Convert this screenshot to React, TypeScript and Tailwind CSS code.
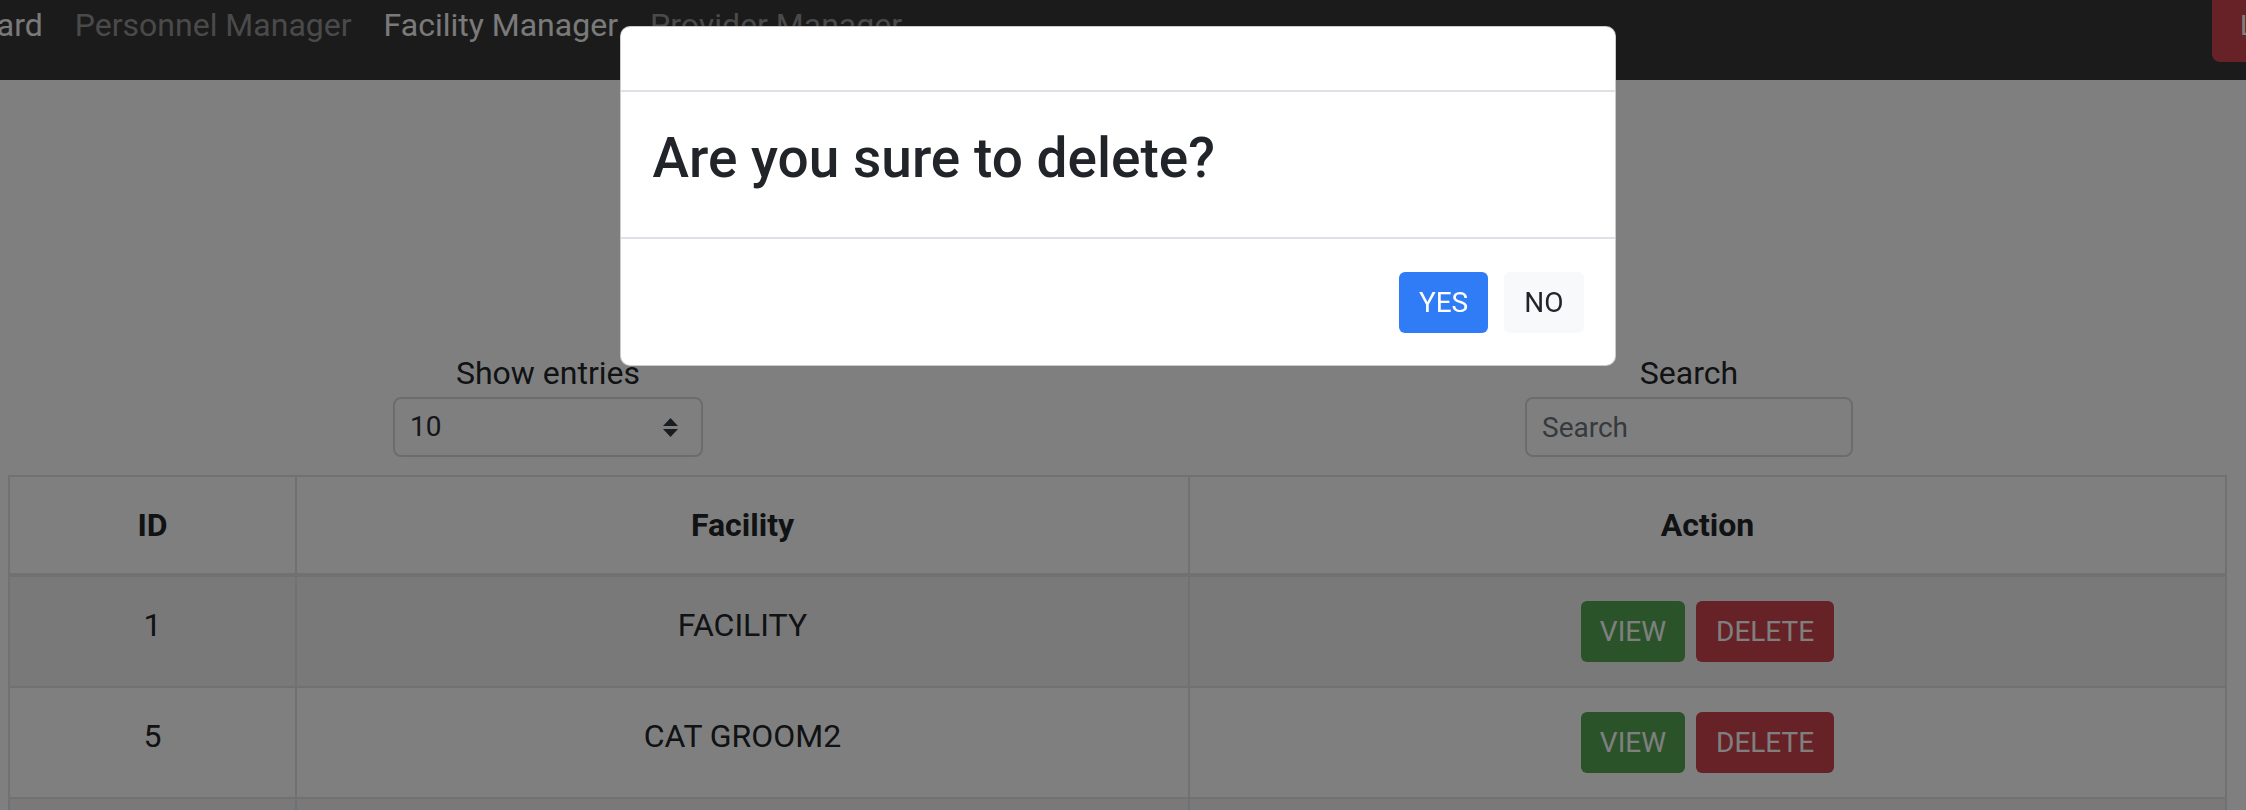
const rows = [
  { id: 1, name: "FACILITY" },
  { id: 5, name: "CAT GROOM2" },
  { id: 6, name: "DOG WALK" },
];

function NavLink({ label, active }: { label: string; active?: boolean }) {
  return (
    <a className={active ? "px-4 text-[#f4f4f4]" : "px-4 text-[#959595]"}>{label}</a>
  );
}

export default function App() {
  return (
    <div className="relative h-[810px] overflow-hidden bg-white font-['Roboto',sans-serif] text-[#212529]">
      <nav className="flex h-[80px] items-start overflow-hidden bg-[#363636]">
        <div className="-ml-[128px] flex pt-[1px] text-[32px] leading-[48px] whitespace-nowrap">
          <NavLink label="Dashboard" active />
          <NavLink label="Personnel Manager" />
          <NavLink label="Facility Manager" active />
          <NavLink label="Provider Manager" />
        </div>
        <button className="-mt-[10px] -mr-[109px] ml-auto h-[72px] w-[143px] shrink-0 rounded-lg bg-[#cc444c] px-7 text-left text-[28px] text-white">
          Logout
        </button>
      </nav>

      <main className="pt-[269px]">
        <div className="flex items-start pl-[393px]">
          <div className="flex w-[310px] flex-col items-center">
            <label className="text-[32px] leading-[48px]">Show entries</label>
            <div className="flex h-[60px] w-full items-center justify-between rounded-lg border-2 border-[#d6d8de] pr-[23px] pl-[15px] text-[28px] text-[#2a2d31]">
              <span>10</span>
              <svg width="15" height="19" viewBox="0 0 15 19" fill="#343a40">
                <polygon points="0,8 7.5,0 15,8" />
                <polygon points="0,11 15,11 7.5,19" />
              </svg>
            </div>
          </div>
          <div className="ml-[822px] flex w-[328px] flex-col items-center">
            <label className="text-[32px] leading-[48px]">Search</label>
            <input
              placeholder="Search"
              className="h-[60px] w-full rounded-lg border-2 border-[#d6d8de] pl-[15px] text-[28px] outline-none placeholder:text-[#6c757d]"
            />
          </div>
        </div>

        <table className="mt-[18px] ml-[8px] w-[2219px] table-fixed border-collapse text-[32px] leading-[48px]">
          <thead>
            <tr>
              <th className="w-[287px] border-2 border-b-4 border-[#dee2e6] p-6 align-top font-bold">ID</th>
              <th className="w-[893px] border-2 border-b-4 border-[#dee2e6] p-6 align-top font-bold">Facility</th>
              <th className="border-2 border-b-4 border-[#dee2e6] p-6 align-top font-bold">Action</th>
            </tr>
          </thead>
          <tbody>
            {rows.map((r, i) => (
              <tr key={r.id} className={i % 2 === 0 ? "bg-[#f2f2f2]" : "bg-white"}>
                <td className="border-2 border-[#dee2e6] p-6 text-center align-top">{r.id}</td>
                <td className="border-2 border-[#dee2e6] p-6 text-center align-top">{r.name}</td>
                <td className="border-2 border-[#dee2e6] p-6 align-top">
                  <div className="flex justify-center gap-[11px] text-[28px] text-white">
                    <button className="h-[61px] rounded-md bg-[#54a654] px-[19px]">VIEW</button>
                    <button className="h-[61px] rounded-md bg-[#cc444c] px-[20px]">DELETE</button>
                  </div>
                </td>
              </tr>
            ))}
          </tbody>
        </table>
      </main>

      <div className="fixed inset-0 flex items-start justify-center bg-black/50 pt-[26px] pr-[11px]">
        <div className="w-[996px] overflow-hidden rounded-[10px] border border-black/20 bg-white">
          <div className="h-[65px] border-b-2 border-[#dee2e6]" />
          <div className="h-[147px] border-b-2 border-[#dee2e6] px-[32px] pt-[33px]">
            <h3 className="text-[55px] leading-[1.2] font-medium text-[#212529]">Are you sure to delete?</h3>
          </div>
          <div className="flex justify-end gap-4 pt-[33px] pr-[31px] pb-[32px] text-[28px]">
            <button className="h-[61px] rounded-md bg-[#2f7cf6] px-5 text-white">YES</button>
            <button className="h-[61px] rounded-md bg-[#f8f9fa] px-5 text-[#212529]">NO</button>
          </div>
        </div>
      </div>
    </div>
  );
}
